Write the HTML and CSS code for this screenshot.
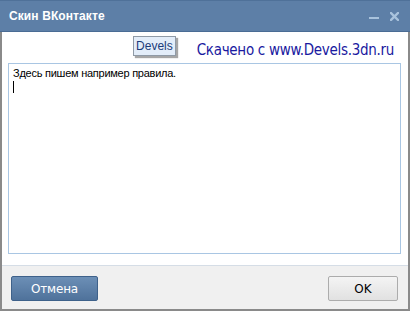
FILE: index.html
```html
<!DOCTYPE html>
<html>
<head>
<meta charset="utf-8">
<link rel="stylesheet" href="styles.css">
</head>
<body>
<div class="window">
  <div class="titlebar">
    <span class="title">Скин ВКонтакте</span>
    <div class="controls">
      <span class="min"></span>
      <svg class="close" width="9" height="9" viewBox="0 0 9 9"><path d="M1 1 L8 8 M8 1 L1 8" stroke="#a8c2dc" stroke-width="2.4" stroke-linecap="square"/></svg>
    </div>
  </div>
  <div class="body">
    <div class="header">
      <span class="tip">Devels</span>
      <span class="link">Скачено с www.Devels.3dn.ru</span>
    </div>
    <div class="editor">
      <div class="line">Здесь пишем например правила.</div>
      <div class="caret"></div>
    </div>
  </div>
  <div class="footer">
    <button class="btn cancel">Отмена</button>
    <button class="btn ok">OK</button>
  </div>
</div>
</body>
</html>
```

FILE: styles.css
```css
html, body { margin: 0; padding: 0; background: #fff; }
.window {
  width: 410px; height: 311px; box-sizing: border-box;
  display: flex; flex-direction: column;
  border-left: 2px solid #8a8a8a; border-right: 2px solid #8a8a8a; border-bottom: 2px solid #8a8a8a;
  font-family: "Liberation Sans", sans-serif;
}
.titlebar {
  height: 32px; margin: 0 -2px; box-sizing: border-box;
  background: #5d7fa7; border-top: 1px solid #4f7199; border-bottom: 1px solid #4a6c94;
  display: flex; align-items: center; justify-content: space-between;
  padding: 0 11px 0 9px;
}
.title { color: #fff; font: bold 12px "Liberation Sans", sans-serif; letter-spacing: 0.1px; }
.controls { display: flex; align-items: center; gap: 11px; }
.min { width: 10px; height: 2px; background: #a8c2dc; margin-top: 4px; }
.close { display: block; }
.body { flex: 1; background: #fff; padding: 0 7px 11px 6px; display: flex; flex-direction: column; border-bottom: 1px solid #d5dde6; }
.header { height: 31px; display: flex; align-items: center; justify-content: flex-end; gap: 21px; padding-right: 7px; }
.tip {
  font: 12px "Liberation Sans", sans-serif; color: #1a3b7a;
  background: #e3edf9; border: 1px solid #8f9aa6; padding: 2px 2px 2px 2px;
  box-shadow: 2px 2px 1px rgba(0,0,0,0.35); margin-top: -4px;
}
.link { font: 15px "DejaVu Sans Condensed", "DejaVu Sans", sans-serif; color: #1a1aa0; margin-top: 5px; letter-spacing: -0.3px; }
.editor { flex: 1; border: 1px solid #a9c6e3; padding: 3px 4px; }
.line { font: 11px "Liberation Sans", sans-serif; color: #000; line-height: 13px; letter-spacing: -0.25px; }
.caret { width: 1px; height: 12px; background: #000; margin-top: 1px; }
.footer { height: 43px; background: #f0f0f0; display: flex; align-items: center; justify-content: space-between; padding: 0 10px 0 9px; }
.btn { height: 25px; font: 12px "DejaVu Sans", sans-serif; border-radius: 2px; padding: 0; margin-top: 2px; }
.cancel { width: 87px; color: #fff; background: linear-gradient(#6c8fb6, #4f729b); border: 1px solid #3e618a; letter-spacing: -0.2px; }
.ok { width: 70px; color: #000; background: linear-gradient(#f4f4f4, #e1e1e1); border: 1px solid #acacac; }
```
